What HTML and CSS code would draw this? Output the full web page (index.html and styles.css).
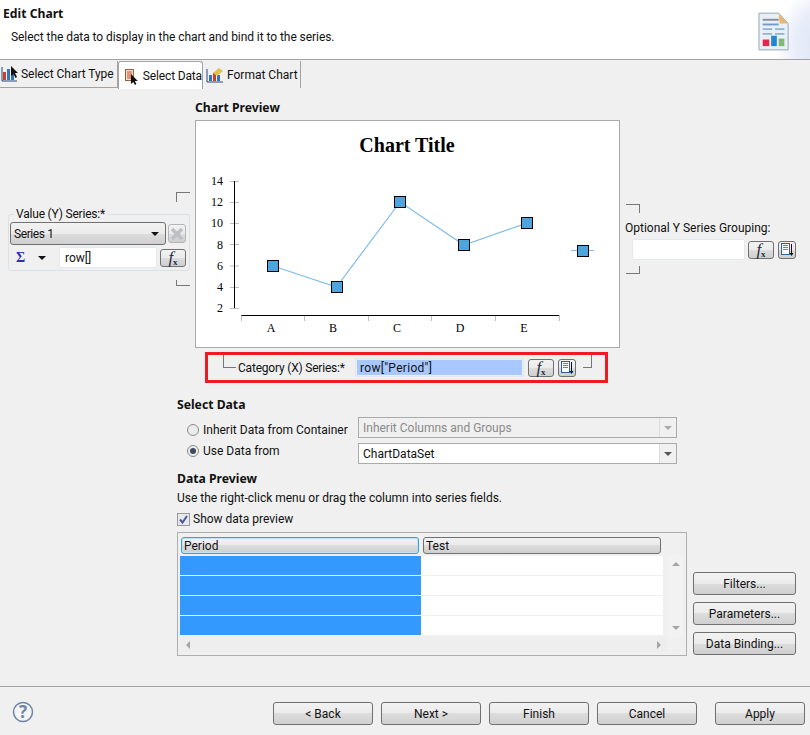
FILE: index.html
```html
<!DOCTYPE html>
<html lang="en">
<head>
<meta charset="utf-8">
<title>Edit Chart</title>
<link rel="stylesheet" href="styles.css">
</head>
<body>
<svg class="sprite" width="0" height="0" aria-hidden="true">
  <symbol id="pick" viewBox="0 0 14 14">
    <rect x="1.500" y="0.500" width="8" height="11" fill="#fff" stroke="#2f5f93"/>
    <path d="M3 2.500h5M3 4.500h5M3 6.500h5" stroke="#4f86bd"/>
    <path d="M11.500 1v9" stroke="#111"/>
    <path d="M9.500 10h4l-2 3z" fill="#111"/>
  </symbol>
</svg>
<div class="dialog">
  <header class="head">
    <div class="head-text">
      <h1 class="title">Edit Chart</h1>
      <p class="subtitle">Select the data to display in the chart and bind it to the series.</p>
    </div>
    <svg class="head-icon" width="32" height="40" viewBox="0 0 34 42">
      <path d="M1 1h21l10 11v28H1z" fill="#e9eff6" stroke="#8ea6ad"/>
      <path d="M22 1l10 11h-9z" fill="#e8b676"/>
      <path d="M5 8h17" stroke="#8a8a98" stroke-width="2"/>
      <path d="M5 13h17" stroke="#6f9cc9" stroke-width="2"/>
      <path d="M5 18h10M18 18h10M5 23h10M18 23h10" stroke="#8fb3d6" stroke-width="2"/>
      <rect x="5" y="29" width="7" height="7" fill="#e0294f"/>
      <rect x="14" y="25" width="6" height="11" fill="#1f86d1"/>
      <rect x="22" y="28" width="6" height="8" fill="#82b877"/>
    </svg>
  </header>

  <nav class="tabs">
    <div class="tab tab-first">
      <svg width="18" height="16" viewBox="0 0 18 16">
        <path d="M1 15V1M1 15h15" stroke="#26457c" fill="none"/>
        <rect x="2" y="6" width="3" height="8" fill="#c8402c"/>
        <rect x="6" y="3" width="3" height="11" fill="#3474b8"/>
        <rect x="10" y="8" width="3" height="6" fill="#3474b8"/>
        <path d="M10 0v10l2.500-2 2 4 1.500-1-2-4h3z" fill="#111"/>
      </svg>
      <span>Select Chart Type</span>
    </div>
    <div class="tab tab-active">
      <svg width="16" height="18" viewBox="0 0 16 18">
        <rect x="1.500" y="2.500" width="8" height="11" fill="#f6e9d4" stroke="#8b5a2b"/>
        <path d="M3 5h5M3 7h5M3 9h5M3 11h5" stroke="#d23b2e"/>
        <path d="M7 7v10l2.500-2 1.500 3 1.500-1-1.500-3h3z" fill="#111"/>
      </svg>
      <span>Select Data</span>
    </div>
    <div class="tab tab-last">
      <svg width="18" height="16" viewBox="0 0 18 16">
        <path d="M1 15V2M1 15h16" stroke="#26457c" fill="none"/>
        <rect x="3" y="8" width="3" height="6" fill="#3474b8"/>
        <rect x="7" y="6" width="3" height="8" fill="#c8402c"/>
        <rect x="11" y="8" width="3" height="6" fill="#3474b8"/>
        <path d="M7 6l6-5 4 3-6 5z" fill="#e2c04a"/>
      </svg>
      <span>Format Chart</span>
    </div>
  </nav>

  <main class="content">
    <section class="chart-row">
      <div class="y-pane">
        <div class="bracket bracket-tl"></div>
        <fieldset class="y-group">
          <legend>Value (Y) Series:*</legend>
          <div class="y-line">
            <div class="series-combo"><span>Series 1</span><i class="caret"></i></div>
            <button class="btn icon-btn del-btn" type="button" aria-label="Delete">
              <svg width="14" height="14" viewBox="0 0 14 14"><path d="M2 2l10 10M12 2L2 12" stroke="#bcc0c4" stroke-width="3.500"/></svg>
            </button>
          </div>
          <div class="y-line y-line-2">
            <span class="sigma">&Sigma;</span><i class="caret caret-gap"></i>
            <div class="field field-y">row[]</div>
            <button class="btn fx" type="button"><i>f</i><sub>x</sub></button>
          </div>
        </fieldset>
        <div class="bracket bracket-bl"></div>
      </div>

      <div class="preview-col">
        <h2 class="heading">Chart Preview</h2>
        <div class="preview">
          <svg width="423" height="226" viewBox="196 121 423 226">
            <g class="axis-ticks">
              <path d="M230 181.500h9M230 202.500h9M230 223.500h9M230 244.500h9M230 266h9M230 287.500h9M230 308.500h9"/>
              <path d="M241.500 315v6M304.500 315v6M368.500 315v6M431.500 315v6M495.500 315v6M559.500 315v6"/>
            </g>
            <path d="M234.500 181v127M241.500 315.500H559" stroke="#000" fill="none"/>
            <polyline points="273,266 336.500,287 400,202 464,245 527,223" fill="none" stroke="#7fbde6" stroke-width="1.200"/>
            <path d="M571 250.500h23" stroke="#7fbde6"/>
            <g class="markers">
              <rect x="267.500" y="260.500" width="11" height="11"/>
              <rect x="331.500" y="281.500" width="11" height="11"/>
              <rect x="394.500" y="196.500" width="11" height="11"/>
              <rect x="458.500" y="239.500" width="11" height="11"/>
              <rect x="521.500" y="217.500" width="11" height="11"/>
              <rect x="577.500" y="245.500" width="11" height="11"/>
            </g>
            <text class="chart-title" x="407" y="152" text-anchor="middle">Chart Title</text>
            <g class="y-labels" text-anchor="end">
              <text x="223" y="185">14</text>
              <text x="223" y="206">12</text>
              <text x="223" y="227">10</text>
              <text x="223" y="249">8</text>
              <text x="223" y="270">6</text>
              <text x="223" y="291">4</text>
              <text x="223" y="312">2</text>
            </g>
            <g class="x-labels" text-anchor="middle">
              <text x="271" y="332">A</text>
              <text x="333" y="332">B</text>
              <text x="397" y="332">C</text>
              <text x="460" y="332">D</text>
              <text x="524" y="332">E</text>
            </g>
          </svg>
        </div>
      </div>

      <div class="opt-pane">
        <div class="bracket bracket-tr"></div>
        <div class="opt-label">Optional Y Series Grouping:</div>
        <div class="opt-line">
          <div class="field field-opt"></div>
          <button class="btn fx" type="button"><i>f</i><sub>x</sub></button>
          <button class="btn icon-btn pick" type="button" aria-label="Pick"><svg width="14" height="14"><use href="#pick"/></svg></button>
        </div>
        <div class="bracket bracket-br"></div>
      </div>
    </section>

    <section class="cat-row">
      <div class="bracket bracket-cat-l"></div>
      <span class="cat-label">Category (X) Series:*</span>
      <div class="field field-cat">row["Period"]</div>
      <button class="btn fx" type="button"><i>f</i><sub>x</sub></button>
      <button class="btn icon-btn pick" type="button" aria-label="Pick"><svg width="14" height="14"><use href="#pick"/></svg></button>
      <div class="bracket bracket-cat-r"></div>
    </section>

    <section class="data-section">
      <h2 class="heading">Select Data</h2>
      <div class="source-grid">
        <label class="radio radio-a"><i class="dot"></i>Inherit Data from Container</label>
        <div class="combo combo-off"><span>Inherit Columns and Groups</span><b class="combo-arrow"></b></div>
        <label class="radio radio-b"><i class="dot dot-on"></i>Use Data from</label>
        <div class="combo"><span>ChartDataSet</span><b class="combo-arrow"></b></div>
      </div>

      <h2 class="heading heading-dp">Data Preview</h2>
      <p class="hint">Use the right-click menu or drag the column into series fields.</p>
      <label class="check">
        <svg width="13" height="13" viewBox="0 0 13 13"><rect x="0.500" y="0.500" width="12" height="12" fill="#e8e8ee" stroke="#9a9a9a"/><path d="M3 6.500l2.500 3L10 3" fill="none" stroke="#4a5a96" stroke-width="2"/></svg>
        Show data preview
      </label>

      <div class="preview-line">
        <div class="table-box">
          <div class="tbl">
            <div class="tbl-head">
              <div class="col-head col-focus">Period</div>
              <div class="col-head">Test</div>
            </div>
            <div class="tbl-rows">
              <div class="tbl-row"><div class="cell-sel"></div></div>
              <div class="tbl-row"><div class="cell-sel"></div></div>
              <div class="tbl-row"><div class="cell-sel"></div></div>
              <div class="tbl-row"><div class="cell-sel"></div></div>
            </div>
            <div class="vscroll"><i class="arr arr-up"></i><i class="arr arr-down"></i></div>
            <div class="hscroll"><i class="arr arr-left"></i><i class="arr arr-right"></i></div>
          </div>
        </div>
        <div class="side-btns">
          <button class="btn" type="button">Filters...</button>
          <button class="btn" type="button">Parameters...</button>
          <button class="btn" type="button">Data Binding...</button>
        </div>
      </div>
    </section>
  </main>

  <footer class="foot">
    <svg class="help" width="22" height="22" viewBox="0 0 22 22">
      <circle cx="11" cy="11" r="9.500" fill="#f3f5f9" stroke="#6f84a6" stroke-width="1.500"/>
      <text x="11" y="16.500" text-anchor="middle" class="help-q">?</text>
    </svg>
    <div class="foot-btns">
      <button class="btn" type="button">&lt; Back</button>
      <button class="btn" type="button">Next &gt;</button>
      <button class="btn" type="button">Finish</button>
      <button class="btn" type="button">Cancel</button>
      <button class="btn btn-apply" type="button">Apply</button>
    </div>
  </footer>
</div>
</body>
</html>
```
FILE: styles.css
```css
* { box-sizing: border-box; }
html, body { margin: 0; padding: 0; }
body { font: 12px/14px Roboto, sans-serif; color: #111; background: #f0f0f0; }
.sprite { position: absolute; }
.dialog { width: 810px; height: 735px; display: flex; flex-direction: column; overflow: hidden; }

/* header */
.head { height: 59px; display: flex; justify-content: space-between; background: radial-gradient(ellipse 50px 60px at 825px 45px, #dde3f5 0%, #e9edf9 60%, #fff 100%) #fff; }
.title { margin: 0; padding: 6px 0 0 3px; font: 700 12.2px/16px "Noto Sans", sans-serif; }
.subtitle { margin: 8px 0 0 11px; letter-spacing: -0.06px; }
.head-icon { margin: 12px 20px 0 0; }

/* tabs */
.tabs { height: 29px; display: flex; border-top: 1px solid #a3a3a3; padding-top: 1px; }
.tab { display: flex; align-items: center; gap: 3px; height: 27px; padding-left: 1px; background: #f0f0f0; border-right: 1px solid #a3a3a3; border-bottom: 1px solid #a3a3a3; }
.tab-first { width: 118px; gap: 2px; letter-spacing: -0.05px; }
.tab-active { width: 85px; padding-left: 5px; background: #fff; border: 1px solid #a3a3a3; border-bottom: 0; border-radius: 3px 3px 0 0; height: 28px; letter-spacing: -0.15px; }
.tab-last { width: 98px; padding-left: 3px; border-bottom: 0; }
.tab-first span, .tab-active span, .tab-last span { white-space: nowrap; }

/* chart row */
.content { flex: 1; }
.chart-row { display: grid; grid-template-columns: 195px 425px 190px; height: 260px; }
.heading { margin: 0; font: 700 12.2px/14px "Noto Sans", sans-serif; }
.preview-col { padding-top: 13px; }
.preview-col .heading { margin-bottom: 5px; }
.preview { width: 425px; height: 228px; background: #fff; border: 1px solid #a9a9a9; }
.preview svg { display: block; }
.axis-ticks path { stroke: #bdbdbd; fill: none; }
.markers rect { fill: #4ea5dd; stroke: #000; }
.chart-title { font: 700 20px "Liberation Serif", serif; }
.y-labels, .x-labels { font: 12px "Liberation Serif", serif; }

.bracket { width: 14px; height: 10px; border: 0 solid #777; }
.bracket-tl { margin: 104px 0 0 176px; border-width: 1px 0 0 1px; }
.bracket-bl { margin: 9px 0 0 176px; height: 6px; border-width: 0 0 1px 1px; }
.bracket-tr { margin-left: 6px; height: 9px; border-width: 1px 1px 0 0; }
.bracket-br { margin: 6px 0 0 6px; height: 8px; border-width: 0 1px 1px 0; }

/* Y series */
.y-group { margin: 5px 0 0 8px; padding: 0 0 2px 1px; width: 182px; height: 64px; border: 1px solid #dbe1e8; border-radius: 3px; }
.y-group legend { margin-left: 4px; padding: 0 2px; line-height: 15px; letter-spacing: -0.2px; }
.y-line { display: flex; align-items: center; gap: 2px; }
.y-line-2 { margin-top: 2px; }
.series-combo { width: 156px; height: 23px; display: flex; align-items: center; justify-content: space-between; padding: 0 6px 0 3px; border: 1px solid #707070; border-radius: 3px; background: linear-gradient(#f2f2f2 0, #ebebeb 50%, #ddd 50%, #cfcfcf 100%); letter-spacing: -0.4px; }
.caret { width: 0; height: 0; border: 4px solid transparent; border-top: 4px solid #111; border-bottom: 0; }
.caret-gap { margin-left: 10px; margin-right: 11px; }
.sigma { margin-left: 6px; width: 10px; font: 700 14px/16px "Liberation Serif", serif; color: #2a34a8; }
.field { background: #fff; border: 1px solid #e3e9ef; border-radius: 2px; padding: 0 5px; display: flex; align-items: center; }
.field-y { width: 98px; height: 21px; }
.field-opt { width: 113px; height: 21px; }
.field-cat { width: 169px; height: 19px; background: #a8c8ff; padding-left: 4px; margin-left: 10px; box-shadow: inset 0 0 0 1px #e6f0ff; letter-spacing: 0.3px; }

.btn { font: 12px/14px Roboto, sans-serif; color: #111; height: 23px; padding: 0; border: 1px solid #707070; border-radius: 3px; background: linear-gradient(#f2f2f2 0, #ebebeb 50%, #ddd 50%, #cfcfcf 100%); text-align: center; }
.icon-btn { display: flex; align-items: center; justify-content: center; }
.del-btn { width: 18px; height: 19px; border-color: #b5b5b5; }
.fx { width: 26px; height: 18px; margin-left: 1px; font: italic 17px/14px "Liberation Serif", serif; color: #1d2c44; }
.fx i { font-weight: 400; }
.fx sub { font-size: 9px; line-height: 0; font-style: normal; font-weight: 700; vertical-align: -2px; }
.pick { width: 18px; height: 18px; }

/* optional */
.opt-pane { padding: 116px 0 0 0; }
.opt-label { margin: 8px 0 4px 5px; white-space: nowrap; }
.opt-line { display: flex; align-items: center; padding-left: 12px; gap: 2px; }
.opt-line .pick { margin-left: 2px; }

/* category */
.cat-row { width: 403px; height: 31px; margin: 4px 0 0 205px; border: 3px solid #ed1c24; display: flex; align-items: center; }
.bracket-cat-l { align-self: flex-start; width: 13px; height: 13px; margin: 0 2px 0 15px; border-width: 0 0 1px 1px; }
.cat-label { white-space: nowrap; width: 107px; letter-spacing: -0.2px; }
.cat-row .fx { margin-left: 4px; }
.cat-row .pick { margin-left: 4px; }
.bracket-cat-r { align-self: flex-start; width: 9px; height: 13px; margin-left: 7px; border-width: 0 1px 1px 0; }

/* data */
.data-section { padding: 15px 0 0 177px; }
.source-grid { display: grid; grid-template-columns: 181px 319px; row-gap: 5px; margin-top: 5px; }
.radio { display: flex; align-items: center; gap: 4px; height: 18px; padding-left: 10px; white-space: nowrap; }
.radio-a { align-self: end; padding-top: 1px; }
.radio-b { align-self: start; margin-top: -1px; }
.dot { flex: none; width: 12px; height: 12px; border-radius: 50%; border: 1px solid #8a8a8a; background: #ececec; display: flex; align-items: center; justify-content: center; }
.dot-on::after { content: ""; width: 6px; height: 6px; border-radius: 50%; background: #3d4a5c; }
.combo { height: 21px; display: flex; align-items: center; justify-content: space-between; border: 1px solid #ababab; background: #fff; padding-left: 4px; }
.combo-off { background: #f0f0f0; color: #8a8a8a; }
.combo-arrow { width: 17px; height: 19px; display: flex; align-items: center; justify-content: center; background: #f0f0f0; border-left: 1px solid #dcdcdc; }
.combo-arrow::after { content: ""; border: 4px solid transparent; border-top-color: #555; border-bottom: 0; }
.combo-off .combo-arrow::after { border-top-color: #aaa; }
.heading-dp { margin-top: 8px; }
.hint { margin: 5px 0 0; }
.check { display: flex; align-items: center; gap: 3px; margin-top: 7px; height: 14px; }

.preview-line { display: flex; margin-top: 6px; align-items: flex-end; }
.table-box { width: 510px; height: 124px; border: 1px solid #aeaeae; padding: 4px 0 0 2px; }
.tbl { display: grid; grid-template-columns: 483px 15px; column-gap: 5px; grid-template-rows: 17px 80px 16px; row-gap: 0; }
.tbl-head { grid-column: 1 / -1; display: flex; gap: 4px; padding-left: 1px; }
.col-head { width: 238px; height: 17px; padding-left: 2px; line-height: 16px; border: 1px solid #707070; border-radius: 3px; background: linear-gradient(#f2f2f2 0, #ebebeb 50%, #ddd 50%, #cfcfcf 100%); }
.col-focus { border-color: #3aa0d8; box-shadow: inset 0 0 0 1px #bfe4f7; }
.tbl-rows { margin-top: 2px; }
.tbl-row { height: 20px; background: #fff; border-bottom: 1px solid #f0f0f0; }
.cell-sel { width: 241px; height: 19px; background: #3399ff; }
.vscroll { margin-top: 1px; height: 82px; display: flex; flex-direction: column; justify-content: space-between; align-items: center; padding: 7px 0; background: #f2f2f2; }
.hscroll { grid-column: 1 / -1; margin: 3px 16px 0 0; height: 16px; display: flex; justify-content: space-between; align-items: center; padding: 0 6px 0 6px; background: #eeeeee; }
.arr { width: 0; height: 0; border: 4px solid transparent; }
.arr-up { border-top: 0; border-bottom-color: #a5a5a5; }
.arr-down { border-bottom: 0; border-top-color: #a5a5a5; }
.arr-left { border-left: 0; border-right-color: #a5a5a5; }
.arr-right { border-right: 0; border-left-color: #a5a5a5; }
.side-btns { width: 103px; margin: 0 0 1px 6px; display: flex; flex-direction: column; gap: 7px; }

/* footer */
.foot { height: 49px; border-top: 1px solid #a3a3a3; display: flex; justify-content: space-between; padding: 15px 5px 0 12px; }
.help { margin-top: -1px; }
.help-q { font: 700 17px "Noto Sans", sans-serif; fill: #6f84a6; }
.foot-btns { display: flex; gap: 8px; }
.foot-btns .btn { width: 100px; }
.foot-btns .btn-apply { width: 90px; margin-left: 10px; }
```
